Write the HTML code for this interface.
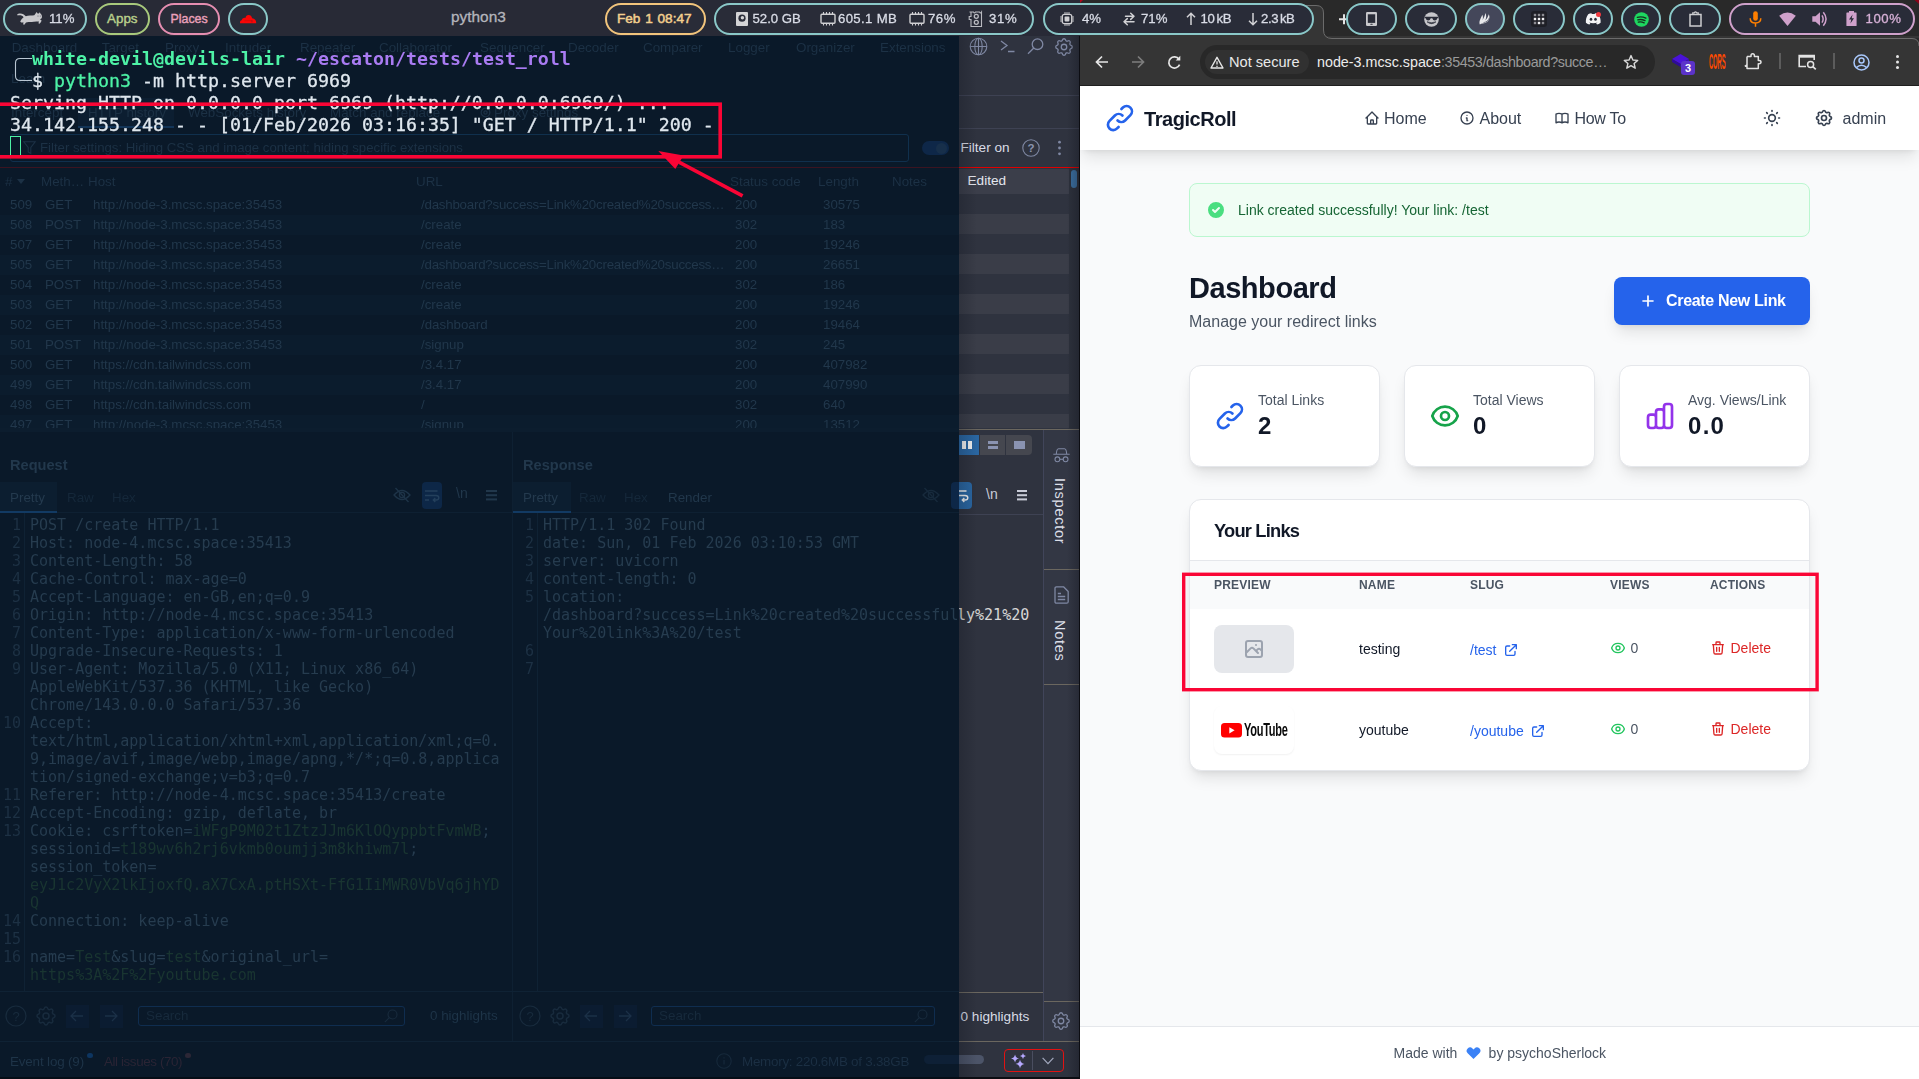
<!DOCTYPE html>
<html lang="en">
<head>
<meta charset="utf-8">
<title>TragicRoll - Dashboard</title>
<style>
*{box-sizing:border-box;margin:0;padding:0}
html,body{width:1919px;height:1079px;overflow:hidden;background:#0a1929}
body{position:relative;font-family:"Liberation Sans",sans-serif;-webkit-font-smoothing:antialiased}
.abs{position:absolute}
svg{display:block;overflow:visible}
/* ---------- top bar ---------- */
#topbar{position:absolute;left:0;top:0;width:1919px;height:36px;background:#282a36;z-index:50}
#topbar .chromebg{position:absolute;left:1080px;top:0;width:839px;height:36px;background:#292929}
.pill{position:absolute;top:3px;height:32px;border:2px solid #8ac8c8;border-radius:16px;background:#292c38}
.pt{position:absolute;top:1px;height:36px;line-height:36px;font-size:13.2px;color:#d9dce6;white-space:nowrap;-webkit-text-stroke:.3px #d9dce6}
/* ---------- terminal ---------- */
#term{position:absolute;left:0;top:36px;width:959px;height:1043px;background:#0a1929;overflow:hidden;will-change:transform}
.tl{position:absolute;left:10px;height:22px;line-height:22px;font-family:"DejaVu Sans Mono","Liberation Mono",monospace;font-size:18.27px;color:#dfe7ee;white-space:pre;-webkit-text-stroke:.3px #dfe7ee}
.g{color:#4df2a6;-webkit-text-stroke-color:#4df2a6}.p{color:#a97bf2}.b{font-weight:bold;-webkit-text-stroke-width:0}
/* faint burp beneath terminal */
.f{position:absolute;white-space:nowrap;font-size:13px;color:#1d3246;line-height:16px}
.fm{position:absolute;white-space:pre;font-family:"DejaVu Sans Mono","Liberation Mono",monospace;font-size:15px;line-height:18px;color:#1b2e40}
/* ---------- burp strip ---------- */
#burp{position:absolute;left:959px;top:36px;width:121px;height:1043px;background:#2f333f;overflow:hidden}
/* ---------- chrome ---------- */
#chrome{position:absolute;left:1080px;top:36px;width:839px;height:1043px;background:#f9fafb;overflow:hidden}
#toolbar{position:absolute;left:0;top:0;width:839px;height:50px;background:#353535;border-bottom:1px solid #1f1f1f}
#page{position:absolute;left:0;top:50px;width:839px;height:993px;background:#f9fafb;overflow:hidden;color:#111827;will-change:transform}
#burp .bt{position:absolute;white-space:nowrap;font-size:13.6px;color:#d9dce6;line-height:18px}
#burp .ln{position:absolute;height:1px;background:#6b675f}
#burp .st{position:absolute;left:0;width:110px;height:20px;background:#3a3d48}

#page .t{position:absolute;white-space:nowrap}
.card{position:absolute;background:#fff;border:1px solid #e5e7eb;border-radius:12px;box-shadow:0 10px 15px -3px rgba(0,0,0,.1),0 4px 6px -4px rgba(0,0,0,.1)}
.nav{font-size:16px;color:#374151;line-height:20px}
.th{font-size:12px;font-weight:bold;color:#4b5563;letter-spacing:.2px;line-height:16px}
.td{font-size:14px;line-height:20px}
</style>
</head>
<body>

<!-- ================= TERMINAL (over Burp) ================= -->
<div id="term">
<!--TERM-FAINT-->
<div class="f" style="left:11.7px;top:3.5px;color:#1c3145;font-size:13.4px">Dashboard</div>
<div class="f" style="left:101.7px;top:3.5px;color:#1c3145;font-size:13.4px">Target</div>
<div class="f" style="left:165px;top:3.5px;color:#1c3145;font-size:13.4px">Proxy</div>
<div class="f" style="left:225px;top:3.5px;color:#1c3145;font-size:13.4px">Intruder</div>
<div class="f" style="left:300px;top:3.5px;color:#1c3145;font-size:13.4px">Repeater</div>
<div class="f" style="left:379px;top:3.5px;color:#1c3145;font-size:13.4px">Collaborator</div>
<div class="f" style="left:480px;top:3.5px;color:#1c3145;font-size:13.4px">Sequencer</div>
<div class="f" style="left:568px;top:3.5px;color:#1c3145;font-size:13.4px">Decoder</div>
<div class="f" style="left:643px;top:3.5px;color:#1c3145;font-size:13.4px">Comparer</div>
<div class="f" style="left:728px;top:3.5px;color:#1c3145;font-size:13.4px">Logger</div>
<div class="f" style="left:796px;top:3.5px;color:#1c3145;font-size:13.4px">Organizer</div>
<div class="f" style="left:880px;top:3.5px;color:#1c3145;font-size:13.4px">Extensions</div>
<div class="f" style="left:11px;top:35px;color:#1c3145;font-size:13.4px">Learn</div>
<div class="abs" style="left:78px;top:62px;width:96px;height:29px;background:#0c1e31"></div><div class="abs" style="left:78px;top:90px;width:96px;height:2px;background:#123457"></div>
<div class="f" style="left:11px;top:68.5px;color:#1c3145;font-size:13.4px">Intercept</div>
<div class="f" style="left:88px;top:68.5px;color:#1c3145;font-size:13.4px">HTTP history</div>
<div class="f" style="left:188px;top:68.5px;color:#1c3145;font-size:13.4px">WebSockets history</div>
<div class="f" style="left:330px;top:68.5px;color:#1c3145;font-size:13.4px">Match and replace</div>
<div class="f" style="left:494px;top:68.5px;color:#1c3145;font-size:13.4px">Proxy settings</div>
<svg class="abs" style="left:479px;top:70px" width="13" height="13" viewBox="0 0 24 24" fill="none" stroke="#1c3145" stroke-width="2.400"><circle cx="12" cy="12" r="8"/><circle cx="12" cy="12" r="3"/></svg>
<div class="abs" style="left:10px;top:98px;width:899px;height:28px;border:1px solid #10304d;border-radius:3px"></div>
<svg class="abs" style="left:23px;top:105px" width="13" height="14" viewBox="0 0 13 14"><path d="M.8 .8H12.200L7.800 6.500V12.500L5.200 11V6.500Z" fill="none" stroke="#1c3145" stroke-width="1.100"/></svg>
<div class="f" style="left:40px;top:104.3px;color:#1c3145;font-size:13.2px">Filter settings: Hiding CSS and image content; hiding specific extensions</div>
<div class="abs" style="left:922px;top:105px;width:27px;height:14px;border-radius:7px;background:#0e2748"></div><div class="abs" style="left:936px;top:106.500px;width:11px;height:11px;border-radius:50%;background:#172f4a"></div>
<div class="abs" style="left:0;top:131px;width:959px;height:1px;background:#3b1421"></div>
<div class="f" style="left:5px;top:137.7px;color:#1c3145;font-size:13.4px">#</div>
<div class="f" style="left:41px;top:137.7px;color:#1c3145;font-size:13.4px">Meth…</div>
<div class="f" style="left:88px;top:137.7px;color:#1c3145;font-size:13.4px">Host</div>
<div class="f" style="left:416px;top:137.7px;color:#1c3145;font-size:13.4px">URL</div>
<div class="f" style="left:730px;top:137.7px;color:#1c3145;font-size:13.4px">Status code</div>
<div class="f" style="left:818px;top:137.7px;color:#1c3145;font-size:13.4px">Length</div>
<div class="f" style="left:892px;top:137.7px;color:#1c3145;font-size:13.4px">Notes</div>
<svg class="abs" style="left:17px;top:143px" width="8" height="5" viewBox="0 0 8 5"><path d="M0 0H8L4 5Z" fill="#1c3145"/></svg>
<div class="abs" style="left:0;top:159px;width:959px;height:233px;overflow:hidden"><div class="f" style="left:10px;top:2px;color:#21374b;font-size:13.3px">509</div><div class="f" style="left:45px;top:2px;color:#21374b;font-size:13.3px">GET</div><div class="f" style="left:93px;top:2px;color:#21374b;font-size:13.3px">http://node-3.mcsc.space:35453</div><div class="f" style="left:421px;top:2px;color:#21374b;font-size:13.3px"><span style="letter-spacing:-.22px">/dashboard?success=Link%20created%20success…</span></div><div class="f" style="left:735px;top:2px;color:#21374b;font-size:13.3px">200</div><div class="f" style="left:823px;top:2px;color:#21374b;font-size:13.3px">30575</div><div class="abs" style="left:0;top:20px;width:959px;height:20px;background:#0b1c2d"></div><div class="f" style="left:10px;top:22px;color:#21374b;font-size:13.3px">508</div><div class="f" style="left:45px;top:22px;color:#21374b;font-size:13.3px">POST</div><div class="f" style="left:93px;top:22px;color:#21374b;font-size:13.3px">http://node-3.mcsc.space:35453</div><div class="f" style="left:421px;top:22px;color:#21374b;font-size:13.3px">/create</div><div class="f" style="left:735px;top:22px;color:#21374b;font-size:13.3px">302</div><div class="f" style="left:823px;top:22px;color:#21374b;font-size:13.3px">183</div><div class="f" style="left:10px;top:42px;color:#21374b;font-size:13.3px">507</div><div class="f" style="left:45px;top:42px;color:#21374b;font-size:13.3px">GET</div><div class="f" style="left:93px;top:42px;color:#21374b;font-size:13.3px">http://node-3.mcsc.space:35453</div><div class="f" style="left:421px;top:42px;color:#21374b;font-size:13.3px">/create</div><div class="f" style="left:735px;top:42px;color:#21374b;font-size:13.3px">200</div><div class="f" style="left:823px;top:42px;color:#21374b;font-size:13.3px">19246</div><div class="abs" style="left:0;top:60px;width:959px;height:20px;background:#0b1c2d"></div><div class="f" style="left:10px;top:62px;color:#21374b;font-size:13.3px">505</div><div class="f" style="left:45px;top:62px;color:#21374b;font-size:13.3px">GET</div><div class="f" style="left:93px;top:62px;color:#21374b;font-size:13.3px">http://node-3.mcsc.space:35453</div><div class="f" style="left:421px;top:62px;color:#21374b;font-size:13.3px"><span style="letter-spacing:-.22px">/dashboard?success=Link%20created%20success…</span></div><div class="f" style="left:735px;top:62px;color:#21374b;font-size:13.3px">200</div><div class="f" style="left:823px;top:62px;color:#21374b;font-size:13.3px">26651</div><div class="f" style="left:10px;top:82px;color:#21374b;font-size:13.3px">504</div><div class="f" style="left:45px;top:82px;color:#21374b;font-size:13.3px">POST</div><div class="f" style="left:93px;top:82px;color:#21374b;font-size:13.3px">http://node-3.mcsc.space:35453</div><div class="f" style="left:421px;top:82px;color:#21374b;font-size:13.3px">/create</div><div class="f" style="left:735px;top:82px;color:#21374b;font-size:13.3px">302</div><div class="f" style="left:823px;top:82px;color:#21374b;font-size:13.3px">186</div><div class="abs" style="left:0;top:100px;width:959px;height:20px;background:#0b1c2d"></div><div class="f" style="left:10px;top:102px;color:#21374b;font-size:13.3px">503</div><div class="f" style="left:45px;top:102px;color:#21374b;font-size:13.3px">GET</div><div class="f" style="left:93px;top:102px;color:#21374b;font-size:13.3px">http://node-3.mcsc.space:35453</div><div class="f" style="left:421px;top:102px;color:#21374b;font-size:13.3px">/create</div><div class="f" style="left:735px;top:102px;color:#21374b;font-size:13.3px">200</div><div class="f" style="left:823px;top:102px;color:#21374b;font-size:13.3px">19246</div><div class="f" style="left:10px;top:122px;color:#21374b;font-size:13.3px">502</div><div class="f" style="left:45px;top:122px;color:#21374b;font-size:13.3px">GET</div><div class="f" style="left:93px;top:122px;color:#21374b;font-size:13.3px">http://node-3.mcsc.space:35453</div><div class="f" style="left:421px;top:122px;color:#21374b;font-size:13.3px">/dashboard</div><div class="f" style="left:735px;top:122px;color:#21374b;font-size:13.3px">200</div><div class="f" style="left:823px;top:122px;color:#21374b;font-size:13.3px">19464</div><div class="abs" style="left:0;top:140px;width:959px;height:20px;background:#0b1c2d"></div><div class="f" style="left:10px;top:142px;color:#21374b;font-size:13.3px">501</div><div class="f" style="left:45px;top:142px;color:#21374b;font-size:13.3px">POST</div><div class="f" style="left:93px;top:142px;color:#21374b;font-size:13.3px">http://node-3.mcsc.space:35453</div><div class="f" style="left:421px;top:142px;color:#21374b;font-size:13.3px">/signup</div><div class="f" style="left:735px;top:142px;color:#21374b;font-size:13.3px">302</div><div class="f" style="left:823px;top:142px;color:#21374b;font-size:13.3px">245</div><div class="f" style="left:10px;top:162px;color:#21374b;font-size:13.3px">500</div><div class="f" style="left:45px;top:162px;color:#21374b;font-size:13.3px">GET</div><div class="f" style="left:93px;top:162px;color:#21374b;font-size:13.3px">https://cdn.tailwindcss.com</div><div class="f" style="left:421px;top:162px;color:#21374b;font-size:13.3px">/3.4.17</div><div class="f" style="left:735px;top:162px;color:#21374b;font-size:13.3px">200</div><div class="f" style="left:823px;top:162px;color:#21374b;font-size:13.3px">407982</div><div class="abs" style="left:0;top:180px;width:959px;height:20px;background:#0b1c2d"></div><div class="f" style="left:10px;top:182px;color:#21374b;font-size:13.3px">499</div><div class="f" style="left:45px;top:182px;color:#21374b;font-size:13.3px">GET</div><div class="f" style="left:93px;top:182px;color:#21374b;font-size:13.3px">https://cdn.tailwindcss.com</div><div class="f" style="left:421px;top:182px;color:#21374b;font-size:13.3px">/3.4.17</div><div class="f" style="left:735px;top:182px;color:#21374b;font-size:13.3px">200</div><div class="f" style="left:823px;top:182px;color:#21374b;font-size:13.3px">407990</div><div class="f" style="left:10px;top:202px;color:#21374b;font-size:13.3px">498</div><div class="f" style="left:45px;top:202px;color:#21374b;font-size:13.3px">GET</div><div class="f" style="left:93px;top:202px;color:#21374b;font-size:13.3px">https://cdn.tailwindcss.com</div><div class="f" style="left:421px;top:202px;color:#21374b;font-size:13.3px">/</div><div class="f" style="left:735px;top:202px;color:#21374b;font-size:13.3px">302</div><div class="f" style="left:823px;top:202px;color:#21374b;font-size:13.3px">640</div><div class="abs" style="left:0;top:220px;width:959px;height:20px;background:#0b1c2d"></div><div class="f" style="left:10px;top:222px;color:#21374b;font-size:13.3px">497</div><div class="f" style="left:45px;top:222px;color:#21374b;font-size:13.3px">GET</div><div class="f" style="left:93px;top:222px;color:#21374b;font-size:13.3px">http://node-3.mcsc.space:35453</div><div class="f" style="left:421px;top:222px;color:#21374b;font-size:13.3px">/signup</div><div class="f" style="left:735px;top:222px;color:#21374b;font-size:13.3px">200</div><div class="f" style="left:823px;top:222px;color:#21374b;font-size:13.3px">13512</div></div>
<div class="abs" style="left:0;top:392px;width:959px;height:4px;background:#0c1d2e"></div>
<div class="f" style="left:10px;top:421px;color:#22384c;font-size:14.600px;font-weight:bold">Request</div>
<div class="f" style="left:523px;top:421px;color:#22384c;font-size:14.600px;font-weight:bold">Response</div>
<div class="abs" style="left:0;top:446px;width:57px;height:30px;background:#0c1e30"></div><div class="abs" style="left:0;top:474.500px;width:57px;height:2px;background:#123a63"></div>
<div class="abs" style="left:513px;top:446px;width:58px;height:30px;background:#0c1e30"></div><div class="abs" style="left:513px;top:474.500px;width:58px;height:2px;background:#123a63"></div>
<div class="abs" style="left:57px;top:476px;width:455px;height:1px;background:#0e2032"></div><div class="abs" style="left:571px;top:476px;width:388px;height:1px;background:#0e2032"></div>
<div class="f" style="left:10px;top:454px;color:#243a4e;font-size:13.4px">Pretty</div>
<div class="f" style="left:67px;top:454px;color:#15283a;font-size:13.4px">Raw</div>
<div class="f" style="left:112px;top:454px;color:#15283a;font-size:13.4px">Hex</div>
<div class="f" style="left:523px;top:454px;color:#243a4e;font-size:13.4px">Pretty</div>
<div class="f" style="left:579px;top:454px;color:#15283a;font-size:13.4px">Raw</div>
<div class="f" style="left:624px;top:454px;color:#15283a;font-size:13.4px">Hex</div>
<div class="f" style="left:668px;top:454px;color:#21374b;font-size:13.4px">Render</div>
<div class="abs" style="left:422px;top:446px;width:20px;height:27px;border-radius:4px;background:#0d2747"></div>
<svg class="abs" style="left:393px;top:451px" width="18" height="16" viewBox="0 0 18 16" fill="none" stroke="#1e3448" stroke-width="1.300"><path d="M1 8Q9 -1 17 8 9 17 1 8Z"/><circle cx="9" cy="8" r="2.600"/><path d="M2.500 1L15.500 15"/></svg>
<svg class="abs" style="left:424px;top:453px" width="16" height="13" viewBox="0 0 16 13" fill="none" stroke="#24405c" stroke-width="1.400"><path d="M1 2H13.500M1 6.500H12Q14.800 6.500 14.800 8.700 14.800 11 12 11H9.500M11.300 9L9.300 11 11.300 13M1 11H5"/></svg>
<div class="f" style="left:456px;top:449px;color:#21374b;font-size:14px">\n</div>
<div class="abs" style="left:486px;top:454px;width:11px;height:1.600px;background:#21374b;box-shadow:0 4.200px 0 #21374b,0 8.400px 0 #21374b"></div>
<svg class="abs" style="left:922px;top:451px" width="18" height="16" viewBox="0 0 18 16" fill="none" stroke="#172a3c" stroke-width="1.300"><path d="M1 8Q9 -1 17 8 9 17 1 8Z"/><circle cx="9" cy="8" r="2.600"/><path d="M2.500 1L15.500 15"/></svg>
<div class="abs" style="left:951px;top:446px;width:8px;height:27px;border-radius:4px 0 0 4px;background:#0d2747"></div>
<div class="abs" style="left:512px;top:396px;width:1px;height:610px;background:#0e2032"></div>
<div class="abs" style="left:24px;top:477px;width:1px;height:478px;background:#0f2234"></div><div class="abs" style="left:537px;top:477px;width:1px;height:478px;background:#0f2234"></div>
<div class="abs" style="left:0;top:955px;width:959px;height:1px;background:#0f2234"></div><div class="abs" style="left:0;top:1004.500px;width:959px;height:1px;background:#0f2234"></div>
<div class="fm" style="left:0;top:480px;width:21px;text-align:right;color:#1d3144">1</div>
<div class="fm" style="left:30px;top:480px;color:#263c4f">POST /create HTTP/1.1</div>
<div class="fm" style="left:0;top:498px;width:21px;text-align:right;color:#1d3144">2</div>
<div class="fm" style="left:30px;top:498px;color:#263c4f">Host: node-4.mcsc.space:35413</div>
<div class="fm" style="left:0;top:516px;width:21px;text-align:right;color:#1d3144">3</div>
<div class="fm" style="left:30px;top:516px;color:#263c4f">Content-Length: 58</div>
<div class="fm" style="left:0;top:534px;width:21px;text-align:right;color:#1d3144">4</div>
<div class="fm" style="left:30px;top:534px;color:#263c4f">Cache-Control: max-age=0</div>
<div class="fm" style="left:0;top:552px;width:21px;text-align:right;color:#1d3144">5</div>
<div class="fm" style="left:30px;top:552px;color:#263c4f">Accept-Language: en-GB,en;q=0.9</div>
<div class="fm" style="left:0;top:570px;width:21px;text-align:right;color:#1d3144">6</div>
<div class="fm" style="left:30px;top:570px;color:#263c4f">Origin: http://node-4.mcsc.space:35413</div>
<div class="fm" style="left:0;top:588px;width:21px;text-align:right;color:#1d3144">7</div>
<div class="fm" style="left:30px;top:588px;color:#263c4f">Content-Type: application/x-www-form-urlencoded</div>
<div class="fm" style="left:0;top:606px;width:21px;text-align:right;color:#1d3144">8</div>
<div class="fm" style="left:30px;top:606px;color:#263c4f">Upgrade-Insecure-Requests: 1</div>
<div class="fm" style="left:0;top:624px;width:21px;text-align:right;color:#1d3144">9</div>
<div class="fm" style="left:30px;top:624px;color:#263c4f">User-Agent: Mozilla/5.0 (X11; Linux x86_64)</div>
<div class="fm" style="left:30px;top:642px;color:#263c4f">AppleWebKit/537.36 (KHTML, like Gecko)</div>
<div class="fm" style="left:30px;top:660px;color:#263c4f">Chrome/143.0.0.0 Safari/537.36</div>
<div class="fm" style="left:0;top:678px;width:21px;text-align:right;color:#1d3144">10</div>
<div class="fm" style="left:30px;top:678px;color:#263c4f">Accept:</div>
<div class="fm" style="left:30px;top:696px;color:#263c4f">text/html,application/xhtml+xml,application/xml;q=0.</div>
<div class="fm" style="left:30px;top:714px;color:#263c4f">9,image/avif,image/webp,image/apng,*/*;q=0.8,applica</div>
<div class="fm" style="left:30px;top:732px;color:#263c4f">tion/signed-exchange;v=b3;q=0.7</div>
<div class="fm" style="left:0;top:750px;width:21px;text-align:right;color:#1d3144">11</div>
<div class="fm" style="left:30px;top:750px;color:#263c4f">Referer: http://node-4.mcsc.space:35413/create</div>
<div class="fm" style="left:0;top:768px;width:21px;text-align:right;color:#1d3144">12</div>
<div class="fm" style="left:30px;top:768px;color:#263c4f">Accept-Encoding: gzip, deflate, br</div>
<div class="fm" style="left:0;top:786px;width:21px;text-align:right;color:#1d3144">13</div>
<div class="fm" style="left:30px;top:786px;color:#263c4f">Cookie: csrftoken=<span style="color:#193531">iWFgP9M02t1ZtzJJm6KlOQyppbtFvmWB</span>;</div>
<div class="fm" style="left:30px;top:804px;color:#263c4f">sessionid=<span style="color:#193531">t189wv6h2rj6vkmb0oumjj3m8khiwm7l</span>;</div>
<div class="fm" style="left:30px;top:822px;color:#263c4f">session_token=</div>
<div class="fm" style="left:30px;top:840px;color:#263c4f"><span style="color:#193531">eyJ1c2VyX2lkIjoxfQ.aX7CxA.ptHSXt-FfG1IiMWR0VbVq6jhYD</span></div>
<div class="fm" style="left:30px;top:858px;color:#263c4f"><span style="color:#193531">Q</span></div>
<div class="fm" style="left:0;top:876px;width:21px;text-align:right;color:#1d3144">14</div>
<div class="fm" style="left:30px;top:876px;color:#263c4f">Connection: keep-alive</div>
<div class="fm" style="left:0;top:894px;width:21px;text-align:right;color:#1d3144">15</div>
<div class="fm" style="left:0;top:912px;width:21px;text-align:right;color:#1d3144">16</div>
<div class="fm" style="left:30px;top:912px;color:#263c4f">name=<span style="color:#193531">Test</span>&amp;slug=<span style="color:#193531">test</span>&amp;original_url=</div>
<div class="fm" style="left:30px;top:930px;color:#263c4f"><span style="color:#193531">https%3A%2F%2Fyoutube.com</span></div>
<div class="fm" style="left:513px;top:480px;width:21px;text-align:right;color:#1d3144">1</div>
<div class="fm" style="left:543px;top:480px;color:#263c4f">HTTP/1.1 302 Found</div>
<div class="fm" style="left:513px;top:498px;width:21px;text-align:right;color:#1d3144">2</div>
<div class="fm" style="left:543px;top:498px;color:#263c4f">date: Sun, 01 Feb 2026 03:10:53 GMT</div>
<div class="fm" style="left:513px;top:516px;width:21px;text-align:right;color:#1d3144">3</div>
<div class="fm" style="left:543px;top:516px;color:#263c4f">server: uvicorn</div>
<div class="fm" style="left:513px;top:534px;width:21px;text-align:right;color:#1d3144">4</div>
<div class="fm" style="left:543px;top:534px;color:#263c4f">content-length: 0</div>
<div class="fm" style="left:513px;top:552px;width:21px;text-align:right;color:#1d3144">5</div>
<div class="fm" style="left:543px;top:552px;color:#263c4f">location:</div>
<div class="fm" style="left:543px;top:570px;color:#263c4f">/dashboard?success=Link%20created%20successful</div>
<div class="fm" style="left:543px;top:588px;color:#263c4f">Your%20link%3A%20/test</div>
<div class="fm" style="left:513px;top:606px;width:21px;text-align:right;color:#1d3144">6</div>
<div class="fm" style="left:513px;top:624px;width:21px;text-align:right;color:#1d3144">7</div>
<svg class="abs" style="left:5px;top:969px" width="22" height="22" viewBox="0 0 22 22"><circle cx="11" cy="11" r="10" fill="none" stroke="#182b3d" stroke-width="1.200"/><text x="11" y="15.500" text-anchor="middle" font-family="Liberation Sans, sans-serif" font-size="13" fill="#182b3d">?</text></svg><svg class="abs" style="left:34px;top:968px" width="24" height="24" viewBox="0 0 24 24" fill="none" stroke="#182b3d" stroke-width="1.500"><path d="M10.325 4.317c.426-1.756 2.924-1.756 3.350 0a1.724 1.724 0 002.573 1.066c1.543-.940 3.310.826 2.370 2.370a1.724 1.724 0 001.065 2.572c1.756.426 1.756 2.924 0 3.350a1.724 1.724 0 00-1.066 2.573c.940 1.543-.826 3.310-2.370 2.370a1.724 1.724 0 00-2.572 1.065c-.426 1.756-2.924 1.756-3.350 0a1.724 1.724 0 00-2.573-1.066c-1.543.940-3.310-.826-2.370-2.370a1.724 1.724 0 00-1.065-2.572c-1.756-.426-1.756-2.924 0-3.350a1.724 1.724 0 001.066-2.573c-.940-1.543.826-3.310 2.370-2.370.996.608 2.296.070 2.572-1.065z"/><circle cx="12" cy="12" r="3"/></svg><div class="abs" style="left:66px;top:969px;width:23px;height:23px;background:#0b1c31"></div><svg class="abs" style="left:66px;top:969px" width="22" height="22" viewBox="0 0 22 22"><path d="M17 11H5M10 6L5 11 10 16" fill="none" stroke="#1b3047" stroke-width="1.300"/></svg><div class="abs" style="left:100px;top:969px;width:23px;height:23px;background:#0b1c31"></div><svg class="abs" style="left:100px;top:969px" width="22" height="22" viewBox="0 0 22 22"><path d="M5 11H17M12 6L17 11 12 16" fill="none" stroke="#1b3047" stroke-width="1.300"/></svg><div class="abs" style="left:138px;top:970px;width:267px;height:20px;border:1px solid #0f2d4f;border-radius:3px"></div><div class="f" style="left:146px;top:972px;color:#172a3c;font-size:13.4px">Search</div><svg class="abs" style="left:384px;top:973px" width="14" height="14" viewBox="0 0 14 14" fill="none" stroke="#182b3d" stroke-width="1.100"><circle cx="8.500" cy="5.500" r="4.500"/><path d="M5.300 8.700L.8 13.200"/></svg>
<svg class="abs" style="left:519px;top:969px" width="22" height="22" viewBox="0 0 22 22"><circle cx="11" cy="11" r="10" fill="none" stroke="#182b3d" stroke-width="1.200"/><text x="11" y="15.500" text-anchor="middle" font-family="Liberation Sans, sans-serif" font-size="13" fill="#182b3d">?</text></svg><svg class="abs" style="left:548px;top:968px" width="24" height="24" viewBox="0 0 24 24" fill="none" stroke="#182b3d" stroke-width="1.500"><path d="M10.325 4.317c.426-1.756 2.924-1.756 3.350 0a1.724 1.724 0 002.573 1.066c1.543-.940 3.310.826 2.370 2.370a1.724 1.724 0 001.065 2.572c1.756.426 1.756 2.924 0 3.350a1.724 1.724 0 00-1.066 2.573c.940 1.543-.826 3.310-2.370 2.370a1.724 1.724 0 00-2.572 1.065c-.426 1.756-2.924 1.756-3.350 0a1.724 1.724 0 00-2.573-1.066c-1.543.940-3.310-.826-2.370-2.370a1.724 1.724 0 00-1.065-2.572c-1.756-.426-1.756-2.924 0-3.350a1.724 1.724 0 001.066-2.573c-.940-1.543.826-3.310 2.370-2.370.996.608 2.296.070 2.572-1.065z"/><circle cx="12" cy="12" r="3"/></svg><div class="abs" style="left:580px;top:969px;width:23px;height:23px;background:#0b1c31"></div><svg class="abs" style="left:580px;top:969px" width="22" height="22" viewBox="0 0 22 22"><path d="M17 11H5M10 6L5 11 10 16" fill="none" stroke="#1b3047" stroke-width="1.300"/></svg><div class="abs" style="left:614px;top:969px;width:23px;height:23px;background:#0b1c31"></div><svg class="abs" style="left:614px;top:969px" width="22" height="22" viewBox="0 0 22 22"><path d="M5 11H17M12 6L17 11 12 16" fill="none" stroke="#1b3047" stroke-width="1.300"/></svg><div class="abs" style="left:651px;top:970px;width:284px;height:20px;border:1px solid #0f2d4f;border-radius:3px"></div><div class="f" style="left:659px;top:972px;color:#172a3c;font-size:13.4px">Search</div><svg class="abs" style="left:914px;top:973px" width="14" height="14" viewBox="0 0 14 14" fill="none" stroke="#182b3d" stroke-width="1.100"><circle cx="8.500" cy="5.500" r="4.500"/><path d="M5.300 8.700L.8 13.200"/></svg>
<div class="f" style="left:430px;top:972px;color:#1e3448;font-size:13.400px">0 highlights</div>
<div class="f" style="left:10px;top:1017.500px;color:#1e3448;font-size:13.400px;letter-spacing:-.15px">Event log (9)</div><div class="abs" style="left:87px;top:1016.500px;width:5.500px;height:5.500px;border-radius:50%;background:#0d3560"></div>
<div class="f" style="left:104px;top:1017.500px;color:#2a2434;font-size:13.400px;letter-spacing:-.4px">All issues (70)</div><div class="abs" style="left:185px;top:1016.500px;width:5.500px;height:5.500px;border-radius:50%;background:#2c2736"></div>
<svg class="abs" style="left:716px;top:1017px" width="16" height="16" viewBox="0 0 16 16"><circle cx="8" cy="8" r="7.200" fill="none" stroke="#16293b" stroke-width="1.100"/><path d="M8 7V11.500M8 4.300V5.500" stroke="#16293b" stroke-width="1.200"/></svg>
<div class="f" style="left:742px;top:1017.500px;color:#1b2f43;font-size:13.400px;letter-spacing:-.25px">Memory: 220.6MB of 3.38GB</div>
<div class="abs" style="left:924px;top:1019px;width:40px;height:9px;border-radius:4.500px;background:#0e2036"></div>
<div class="abs" style="left:0;top:1041px;width:959px;height:2px;background:#050d16"></div>
<!--/TERM-FAINT-->
<!--TERM-TEXT-->
<svg class="abs" style="left:0;top:0" width="60" height="60"><path d="M32 22.5H20Q15.5 22.5 15.5 27V40Q15.5 44.5 20 44.5H32" fill="none" stroke="#b9c6d2" stroke-width="1.1"/></svg>
<div class="tl" style="top:12px">  <span class="g b">white-devil@devils-lair</span> <span class="p b">~/escaton/tests/test_roll</span></div>
<div class="tl" style="top:34px">  $ <span class="g">python3</span> -m http.server 6969</div>
<div class="tl" style="top:56px">Serving HTTP on 0.0.0.0 port 6969 (http://0.0.0.0:6969/) ...</div>
<div class="tl" style="top:78px">34.142.155.248 - - [01/Feb/2026 03:16:35] "GET / HTTP/1.1" 200 -</div>
<div class="abs" style="left:10px;top:100px;width:11px;height:20px;border:1px solid #4df2a6"></div>
<!--/TERM-TEXT-->
</div>

<!-- ================= BURP STRIP ================= -->
<div id="burp">
<!--BURP-->
<!-- coords relative to (959,36) -->
<!-- top icons -->
<svg class="abs" style="left:10px;top:1px" width="19" height="19" viewBox="0 0 19 19" fill="none" stroke="#7f88a3" stroke-width="1.100"><circle cx="9.500" cy="9.500" r="8.300"/><ellipse cx="9.500" cy="9.500" rx="3.700" ry="8.300"/><path d="M1.200 9.500H17.800M9.500 1.200V17.800"/></svg>
<svg class="abs" style="left:41px;top:4px" width="15" height="13" viewBox="0 0 15 13" fill="none" stroke="#7f88a3" stroke-width="1.300"><path d="M1 1L7 5.500 1 10M8 11.500H14.500"/></svg>
<svg class="abs" style="left:68px;top:2px" width="17" height="17" viewBox="0 0 17 17" fill="none" stroke="#7f88a3" stroke-width="1.300"><circle cx="10.500" cy="6.200" r="5.300"/><path d="M6.800 10L1 15.800"/></svg>
<svg class="abs" style="left:94px;top:-.5px" width="22" height="22" viewBox="0 0 24 24" fill="none" stroke="#7f88a3" stroke-width="1.400" stroke-linecap="round" stroke-linejoin="round"><path d="M10.325 4.317c.426-1.756 2.924-1.756 3.350 0a1.724 1.724 0 002.573 1.066c1.543-.940 3.310.826 2.370 2.370a1.724 1.724 0 001.065 2.572c1.756.426 1.756 2.924 0 3.350a1.724 1.724 0 00-1.066 2.573c.940 1.543-.826 3.310-2.370 2.370a1.724 1.724 0 00-2.572 1.065c-.426 1.756-2.924 1.756-3.350 0a1.724 1.724 0 00-2.573-1.066c-1.543.940-3.310-.826-2.370-2.370a1.724 1.724 0 00-1.065-2.572c-1.756-.426-1.756-2.924 0-3.350a1.724 1.724 0 001.066-2.573c-.940-1.543.826-3.310 2.370-2.370.996.608 2.296.070 2.572-1.065z"/><circle cx="12" cy="12" r="3"/></svg>
<div class="abs" style="left:0;top:59px;width:120px;height:1px;background:#3e4253"></div>
<div class="abs" style="left:0;top:92px;width:120px;height:1px;background:#3e4253"></div>
<!-- filter row -->
<div class="bt" style="left:1.500px;top:103px">Filter on</div>
<svg class="abs" style="left:62.500px;top:103px" width="18" height="18" viewBox="0 0 18 18"><circle cx="9" cy="9" r="8.200" fill="none" stroke="#7f88a3" stroke-width="1.100"/><text x="9" y="13.200" text-anchor="middle" font-family="Liberation Sans, sans-serif" font-size="11.500" font-weight="bold" fill="#8a93ad">?</text></svg>
<svg class="abs" style="left:98px;top:104px" width="5" height="16" viewBox="0 0 5 16" fill="#7f88a3"><circle cx="2.500" cy="2.200" r="1.400"/><circle cx="2.500" cy="8" r="1.400"/><circle cx="2.500" cy="13.800" r="1.400"/></svg>
<div class="abs" style="left:0;top:131px;width:120px;height:1px;background:#e10000"></div>
<!-- table header + stripes -->
<div class="abs" style="left:110px;top:132px;width:10px;height:262px;background:#2d313c"></div>
<div class="abs" style="left:0;top:133px;width:110px;height:25px;background:#3b3e4a"></div>
<div class="bt" style="left:8.500px;top:136px;color:#e4e6ee">Edited</div>
<div class="abs" style="left:112px;top:134px;width:6px;height:18px;border-radius:3px;background:#3b6e9f"></div>
<div class="st" style="top:178px"></div><div class="st" style="top:218px"></div><div class="st" style="top:258px"></div><div class="st" style="top:298px"></div><div class="st" style="top:338px"></div><div class="st" style="top:378px;height:14px"></div>
<div class="ln" style="left:0;top:393px;width:120px"></div>
<!-- inspector column -->
<div class="abs" style="left:84px;top:394px;width:36px;height:612px;background:#333744;border-left:1px solid #41455a"></div>
<!-- layout buttons -->
<div class="abs" style="left:-6px;top:399px;width:26px;height:20px;background:#2a66a1;border-radius:4px 0 0 4px"></div>
<div class="abs" style="left:2.800px;top:404.600px;width:4px;height:8.400px;background:#f1f1f1"></div><div class="abs" style="left:9.200px;top:404.600px;width:4px;height:8.400px;background:#f1f1f1"></div>
<div class="abs" style="left:21px;top:399px;width:25px;height:20px;background:#45474f"></div>
<div class="abs" style="left:28.500px;top:404.600px;width:10.500px;height:3px;background:#8a93b1"></div><div class="abs" style="left:28.500px;top:410px;width:10.500px;height:3px;background:#8a93b1"></div>
<div class="abs" style="left:47px;top:399px;width:26px;height:20px;background:#45474f;border-radius:0 4px 4px 0"></div>
<div class="abs" style="left:54.500px;top:404.600px;width:11px;height:8.400px;background:#8a93b1"></div>
<!-- editor toolbar -->
<div class="abs" style="left:-8px;top:446px;width:21px;height:27px;background:#2a66a1;border-radius:4px"></div>
<svg class="abs" style="left:-6px;top:453px" width="16" height="13" viewBox="0 0 16 13" fill="none" stroke="#f1f1f1" stroke-width="1.400"><path d="M1 2H13.500M1 6.500H12Q14.800 6.500 14.800 8.700 14.800 11 12 11H9.500M11.300 9L9.300 11 11.300 13M1 11H5"/></svg>
<div class="bt" style="left:27px;top:449px;font-size:14px;color:#c9ccd8">\n</div>
<div class="abs" style="left:58px;top:454px;width:10px;height:1.600px;background:#c9ccd8;box-shadow:0 4.200px 0 #c9ccd8,0 8.400px 0 #c9ccd8"></div>
<div class="abs" style="left:0;top:478px;width:84px;height:1px;background:#3e4253"></div>
<!-- response text tail -->
<div class="abs" style="left:-2px;top:570px;font-family:'DejaVu Sans Mono','Liberation Mono',monospace;font-size:15px;line-height:18px;color:#d6d6d6;white-space:pre">ly%21%20</div>
<!-- inspector tab -->
<svg class="abs" style="left:94px;top:411.500px" width="17" height="15" viewBox="0 0 17 15" fill="none" stroke="#7f88a3" stroke-width="1.100"><path d="M.3 6.300H16.700M3.300 6.300Q3.600 .8 5.600 .8H11.400Q13.400 .8 13.700 6.300"/><circle cx="4.400" cy="11.300" r="2.400"/><circle cx="12.600" cy="11.300" r="2.400"/><path d="M6.800 11.300H10.200"/></svg>
<div class="bt" style="left:92px;top:442px;width:18px;height:66px;writing-mode:vertical-rl;font-size:14.5px;letter-spacing:.75px;line-height:18px;color:#dcdfe8">Inspector</div>
<div class="ln" style="left:85px;top:533px;width:35px"></div>
<svg class="abs" style="left:95px;top:549.500px" width="15" height="18" viewBox="0 0 15 18" fill="none" stroke="#7f88a3" stroke-width="1.300" stroke-linejoin="round"><path d="M2.500 .8H9.500L14.200 5.500V15.700Q14.200 17.200 12.700 17.200H2.500Q1 17.200 1 15.700V2.300Q1 .8 2.500 .8Z"/><path d="M3.800 7.500H7M3.800 10.500H11.200M3.800 13.500H11.200"/></svg>
<div class="bt" style="left:92px;top:584px;width:18px;height:40px;writing-mode:vertical-rl;font-size:14.5px;letter-spacing:.7px;line-height:18px;color:#dcdfe8">Notes</div>
<div class="ln" style="left:85px;top:648px;width:35px"></div>
<!-- bottom -->
<div class="ln" style="left:0;top:956px;width:84px"></div>
<div class="ln" style="left:85px;top:965px;width:35px"></div>
<div class="bt" style="left:1.500px;top:971.500px">0 highlights</div>
<svg class="abs" style="left:91px;top:974px" width="22" height="22" viewBox="0 0 24 24" fill="none" stroke="#7f88a3" stroke-width="1.400" stroke-linecap="round" stroke-linejoin="round"><path d="M10.325 4.317c.426-1.756 2.924-1.756 3.350 0a1.724 1.724 0 002.573 1.066c1.543-.940 3.310.826 2.370 2.370a1.724 1.724 0 001.065 2.572c1.756.426 1.756 2.924 0 3.350a1.724 1.724 0 00-1.066 2.573c.940 1.543-.826 3.310-2.370 2.370a1.724 1.724 0 00-2.572 1.065c-.426 1.756-2.924 1.756-3.350 0a1.724 1.724 0 00-2.573-1.066c-1.543.940-3.310-.826-2.370-2.370a1.724 1.724 0 00-1.065-2.572c-1.756-.426-1.756-2.924 0-3.350a1.724 1.724 0 001.066-2.573c-.940-1.543.826-3.310 2.370-2.370.996.608 2.296.070 2.572-1.065z"/><circle cx="12" cy="12" r="3"/></svg>
<div class="abs" style="left:0;top:1005px;width:120px;height:38px;background:#2f333f"></div>
<div class="ln" style="left:0;top:1005px;width:120px"></div>
<div class="abs" style="left:-20px;top:1019px;width:44.500px;height:9px;border-radius:4.500px;background:#4c5468"></div>
<div class="abs" style="left:45px;top:1013px;width:60px;height:23px;border:1px solid #e21212;border-radius:4px"></div>
<div class="abs" style="left:73px;top:1015px;width:1px;height:19px;background:#4a4e60"></div>
<svg class="abs" style="left:52px;top:1016.500px" width="16" height="16" viewBox="0 0 16 16" fill="#b5a8ff"><path d="M4 1.500Q4.500 5 8 5.500 4.500 6 4 9.500 3.500 6 0 5.500 3.500 5 4 1.500Z"/><path d="M12 0Q12.300 2.700 15 3 12.300 3.300 12 6 11.700 3.300 9 3 11.700 2.700 12 0Z"/><path d="M9 6.500Q9.600 10.400 13.500 11 9.600 11.600 9 15.500 8.400 11.600 4.500 11 8.400 10.400 9 6.500Z"/></svg>
<svg class="abs" style="left:83px;top:1020.500px" width="12" height="8" viewBox="0 0 12 8"><path d="M.6 .8L6 6.600 11.400 .8" fill="none" stroke="#a2a8bd" stroke-width="1.200"/></svg>
<div class="abs" style="left:0;top:1041px;width:121px;height:2px;background:#0c0d12"></div>
<div class="abs" style="left:120px;top:0;width:1px;height:1043px;background:#0c0d12"></div>

<div class="abs" style="left:0;top:0;width:18px;height:1043px;background:linear-gradient(90deg,rgba(10,14,24,.22),rgba(10,14,24,0))"></div>
<div class="abs" style="left:108px;top:0;width:12px;height:1043px;background:linear-gradient(90deg,rgba(10,12,20,0),rgba(10,12,20,.28))"></div>
<!--/BURP-->
</div>

<!-- ================= CHROME ================= -->
<div id="chrome">
<div id="toolbar">
<!--TOOLBAR-->
<!-- coordinates relative to (1080,36) -->
<svg class="abs" style="left:15px;top:19px" width="14" height="14" viewBox="0 0 14 14"><path d="M13 7H2M7 1.500L1.500 7 7 12.500" fill="none" stroke="#e6e6e6" stroke-width="1.700"/></svg>
<svg class="abs" style="left:51px;top:19px" width="14" height="14" viewBox="0 0 14 14"><path d="M1 7H12M7 1.500L12.500 7 7 12.500" fill="none" stroke="#7d7d7d" stroke-width="1.700"/></svg>
<svg class="abs" style="left:87px;top:18.500px" width="15" height="15" viewBox="0 0 15 15"><path d="M12.600 9.600A5.600 5.600 0 1 1 12 4.200" fill="none" stroke="#e6e6e6" stroke-width="1.700"/><path d="M13.300.8V5.400H8.700Z" fill="#e6e6e6"/></svg>
<div class="abs" style="left:120px;top:9px;width:455px;height:34px;border-radius:17px;background:#282828"></div>
<div class="abs" style="left:125px;top:14px;width:104px;height:24px;border-radius:12px;background:#313131"></div>
<svg class="abs" style="left:130px;top:19.500px" width="14" height="13" viewBox="0 0 14 13"><path d="M7 1.300L13 12H1Z" fill="none" stroke="#e6e6e6" stroke-width="1.400" stroke-linejoin="round"/><path d="M7 5.200V8.600M7 9.700V11" stroke="#e6e6e6" stroke-width="1.300"/></svg>
<div class="abs" id="ns" style="left:149px;top:9px;height:34px;line-height:34px;font-size:14.6px;color:#e9e9e9;white-space:nowrap">Not secure</div>
<div class="abs" id="url" style="left:237px;top:9px;height:34px;line-height:34px;font-size:14.3px;color:#9a9a9a;white-space:nowrap"><span style="color:#ececec">node-3.mcsc.space</span><span style="letter-spacing:-.38px">:35453/dashboard?succe…</span></div>
<svg class="abs" style="left:543px;top:17.500px" width="16" height="16" viewBox="0 0 16 16"><path d="M8 1.600L9.900 6 14.700 6.400 11.100 9.500 12.200 14.200 8 11.700 3.800 14.200 4.900 9.500 1.300 6.400 6.100 6Z" fill="none" stroke="#d8d8d8" stroke-width="1.400" stroke-linejoin="round"/></svg>
<!-- extensions -->
<svg class="abs" style="left:592px;top:18px" width="18" height="15" viewBox="0 0 18 15"><path d="M8.500 0L17 5 8.500 10 0 5Z" fill="#4a12d8"/><path d="M0 5V8L8.500 13V10Z" fill="#2e0a9a"/><path d="M17 5V8L8.500 13V10Z" fill="#3a0fb8"/></svg>
<div class="abs" style="left:601px;top:25px;width:14px;height:14px;border-radius:3px;background:#5b33c9;color:#fff;font-size:11px;font-weight:bold;line-height:14px;text-align:center">3</div>
<div class="abs" style="left:629px;top:16px;height:20px;line-height:20px;font-size:15px;font-weight:bold;color:#ff4a00;transform:scale(.39,1.45);transform-origin:0 50%;letter-spacing:-.3px">CORS</div>
<svg class="abs" style="left:664px;top:17px" width="18" height="17" viewBox="0 0 18 17"><path d="M3 3.500H7V2.600Q7 .8 8.700 .8 10.400 .8 10.400 2.600V3.500H14.300V7.400H15.200Q17 7.400 17 9.100 17 10.800 15.200 10.800H14.300V15.500H3V11.800L.8 13.400M3 11.800V3.500" fill="none" stroke="#e3e3e3" stroke-width="1.500" stroke-linejoin="round"/></svg>
<div class="abs" style="left:699px;top:17px;width:1.500px;height:16px;background:#5c5c5c"></div>
<svg class="abs" style="left:718px;top:18px" width="19" height="16" viewBox="0 0 19 16"><path d="M8 12.500H1.200V1.500H16.200V6" fill="none" stroke="#e3e3e3" stroke-width="1.600"/><path d="M1.200 2.500H16.200" stroke="#e3e3e3" stroke-width="2.400"/><circle cx="12.600" cy="10.400" r="3" fill="none" stroke="#e3e3e3" stroke-width="1.500"/><path d="M14.800 12.600L17.800 15.400" stroke="#e3e3e3" stroke-width="1.700"/></svg>
<div class="abs" style="left:753px;top:17px;width:1.500px;height:16px;background:#5c5c5c"></div>
<svg class="abs" style="left:773px;top:17.500px" width="17" height="17" viewBox="0 0 17 17"><circle cx="8.500" cy="8.500" r="7.500" fill="none" stroke="#a8c7fa" stroke-width="1.500"/><circle cx="8.500" cy="6.600" r="2.500" fill="none" stroke="#a8c7fa" stroke-width="1.500"/><path d="M3.300 13.600Q8.500 8.800 13.700 13.600" fill="none" stroke="#a8c7fa" stroke-width="1.500"/></svg>
<div class="abs" style="left:815.500px;top:19px;width:3px;height:3px;border-radius:50%;background:#e6e6e6;box-shadow:0 5.500px 0 #e6e6e6,0 11px 0 #e6e6e6"></div>
<!--/TOOLBAR-->
</div>
<div id="page">
<!--PAGE-->
<!-- coordinates relative to (1080,86) -->
<!-- nav -->
<div class="abs" style="left:0;top:0;width:839px;height:64px;background:#fff;box-shadow:0 10px 15px -3px rgba(0,0,0,.1),0 4px 6px -4px rgba(0,0,0,.1)"></div>
<svg class="abs" style="left:24px;top:16px" width="32" height="32" viewBox="0 0 24 24" fill="none" stroke="#2563eb" stroke-width="2" stroke-linecap="round" stroke-linejoin="round"><path d="M13.828 10.172a4 4 0 00-5.656 0l-4 4a4 4 0 105.656 5.656l1.102-1.101m-.758-4.899a4 4 0 005.656 0l4-4a4 4 0 00-5.656-5.656l-1.100 1.100"/></svg>
<div class="t" id="brand" style="left:64px;top:18.5px;font-size:20px;font-weight:bold;line-height:28px;color:#111827;letter-spacing:-.45px">TragicRoll</div>
<svg class="abs" style="left:284px;top:24px" width="16" height="16" viewBox="0 0 24 24" fill="none" stroke="#374151" stroke-width="2" stroke-linecap="round" stroke-linejoin="round"><path d="M3 12l2-2m0 0l7-7 7 7M5 10v10a1 1 0 001 1h3m10-11l2 2m-2-2v10a1 1 0 01-1 1h-3m-6 0a1 1 0 001-1v-4a1 1 0 011-1h2a1 1 0 011 1v4a1 1 0 001 1m-6 0h6"/></svg>
<div class="t nav" style="left:304px;top:23px">Home</div>
<svg class="abs" style="left:379px;top:24px" width="16" height="16" viewBox="0 0 24 24" fill="none" stroke="#374151" stroke-width="2" stroke-linecap="round" stroke-linejoin="round"><path d="M13 16h-1v-4h-1m1-4h.010M21 12a9 9 0 11-18 0 9 9 0 0118 0z"/></svg>
<div class="t nav" style="left:399.500px;top:23px">About</div>
<svg class="abs" style="left:474px;top:24px" width="16" height="16" viewBox="0 0 24 24" fill="none" stroke="#374151" stroke-width="2" stroke-linecap="round" stroke-linejoin="round"><path d="M12 6.253v13m0-13C10.832 5.477 9.246 5 7.500 5S4.168 5.477 3 6.253v13C4.168 18.477 5.754 18 7.500 18s3.332.477 4.500 1.253m0-13C13.168 5.477 14.754 5 16.500 5c1.747 0 3.332.477 4.500 1.253v13C19.832 18.477 18.247 18 16.500 18c-1.746 0-3.332.477-4.500 1.253"/></svg>
<div class="t nav" style="left:494.500px;top:23px;letter-spacing:-.3px">How To</div>
<svg class="abs" style="left:682px;top:22px" width="20" height="20" viewBox="0 0 24 24" fill="none" stroke="#374151" stroke-width="2" stroke-linecap="round" stroke-linejoin="round"><path d="M12 3v1m0 16v1m9-9h-1M4 12H3m15.364 6.364l-.707-.707M6.343 6.343l-.707-.707m12.728 0l-.707.707M6.343 17.657l-.707.707M16 12a4 4 0 11-8 0 4 4 0 018 0z"/></svg>
<svg class="abs" style="left:734px;top:22px" width="20" height="20" viewBox="0 0 24 24" fill="none" stroke="#374151" stroke-width="2" stroke-linecap="round" stroke-linejoin="round"><path d="M10.325 4.317c.426-1.756 2.924-1.756 3.350 0a1.724 1.724 0 002.573 1.066c1.543-.940 3.310.826 2.370 2.370a1.724 1.724 0 001.065 2.572c1.756.426 1.756 2.924 0 3.350a1.724 1.724 0 00-1.066 2.573c.940 1.543-.826 3.310-2.370 2.370a1.724 1.724 0 00-2.572 1.065c-.426 1.756-2.924 1.756-3.350 0a1.724 1.724 0 00-2.573-1.066c-1.543.940-3.310-.826-2.370-2.370a1.724 1.724 0 00-1.065-2.572c-1.756-.426-1.756-2.924 0-3.350a1.724 1.724 0 001.066-2.573c-.940-1.543.826-3.310 2.370-2.370.996.608 2.296.070 2.572-1.065z"/><path d="M15 12a3 3 0 11-6 0 3 3 0 016 0z"/></svg>
<div class="t nav" style="left:762.500px;top:23px">admin</div>
<!--PAGE2-->
<!-- alert -->
<div class="abs" style="left:109px;top:97px;width:621px;height:54px;border:1px solid #bbf7d0;border-radius:8px;background:#f0fdf4"></div>
<svg class="abs" style="left:126px;top:114px" width="20" height="20" viewBox="0 0 20 20"><path fill="#4ade80" fill-rule="evenodd" d="M10 18a8 8 0 100-16 8 8 0 000 16zm3.707-9.293a1 1 0 00-1.414-1.414L9 10.586 7.707 9.293a1 1 0 00-1.414 1.414l2 2a1 1 0 001.414 0l4-4z"/></svg>
<div class="t" id="alert" style="left:158px;top:114px;font-size:14px;line-height:20px;color:#166534">Link created successfully! Your link: /test</div>
<!-- heading -->
<div class="t" id="h1" style="left:109px;top:184px;font-size:29px;font-weight:bold;line-height:36px;color:#111827;letter-spacing:-.45px">Dashboard</div>
<div class="t" id="sub" style="left:109px;top:224px;font-size:16px;line-height:24px;color:#4b5563">Manage your redirect links</div>
<!-- button -->
<div class="abs" style="left:534px;top:191px;width:196px;height:48px;border-radius:8px;background:#2563eb;box-shadow:0 10px 15px -3px rgba(0,0,0,.1),0 4px 6px -4px rgba(0,0,0,.1)"></div>
<svg class="abs" style="left:558px;top:205px" width="20" height="20" viewBox="0 0 24 24" fill="none" stroke="#fff" stroke-width="2" stroke-linecap="round" stroke-linejoin="round"><path d="M12 6v6m0 0v6m0-6h6m-6 0H6"/></svg>
<div class="t" id="btn" style="left:586px;top:203px;font-size:16px;font-weight:bold;line-height:24px;color:#fff;letter-spacing:-.32px">Create New Link</div>
<!-- stat cards -->
<div class="card" style="left:109px;top:279px;width:191px;height:102px"></div>
<svg class="abs" style="left:134px;top:314px" width="32" height="32" viewBox="0 0 24 24" fill="none" stroke="#2563eb" stroke-width="2" stroke-linecap="round" stroke-linejoin="round"><path d="M13.828 10.172a4 4 0 00-5.656 0l-4 4a4 4 0 105.656 5.656l1.102-1.101m-.758-4.899a4 4 0 005.656 0l4-4a4 4 0 00-5.656-5.656l-1.100 1.100"/></svg>
<div class="t" style="left:178px;top:304px;font-size:14px;line-height:20px;color:#4b5563">Total Links</div>
<div class="t" style="left:178px;top:324px;font-size:24px;font-weight:bold;line-height:32px;color:#111827">2</div>
<div class="card" style="left:324px;top:279px;width:191px;height:102px"></div>
<svg class="abs" style="left:349px;top:314px" width="32" height="32" viewBox="0 0 24 24" fill="none" stroke="#16a34a" stroke-width="2" stroke-linecap="round" stroke-linejoin="round"><path d="M15 12a3 3 0 11-6 0 3 3 0 016 0z"/><path d="M2.458 12C3.732 7.943 7.523 5 12 5c4.478 0 8.268 2.943 9.542 7-1.274 4.057-5.064 7-9.542 7-4.477 0-8.268-2.943-9.542-7z"/></svg>
<div class="t" style="left:393px;top:304px;font-size:14px;line-height:20px;color:#4b5563">Total Views</div>
<div class="t" style="left:393px;top:324px;font-size:24px;font-weight:bold;line-height:32px;color:#111827">0</div>
<div class="card" style="left:539px;top:279px;width:191px;height:102px"></div>
<svg class="abs" style="left:564.3px;top:314px" width="32" height="32" viewBox="0 0 24 24" fill="none" stroke="#9333ea" stroke-width="2" stroke-linecap="round" stroke-linejoin="round"><path d="M9 19v-6a2 2 0 00-2-2H5a2 2 0 00-2 2v6a2 2 0 002 2h2a2 2 0 002-2zm0 0V9a2 2 0 012-2h2a2 2 0 012 2v10m-6 0a2 2 0 002 2h2a2 2 0 002-2m0 0V5a2 2 0 012-2h2a2 2 0 012 2v14a2 2 0 01-2 2h-2a2 2 0 01-2-2z"/></svg>
<div class="t" style="left:608px;top:304px;font-size:14px;line-height:20px;color:#4b5563">Avg. Views/Link</div>
<div class="t" style="left:608px;top:324px;font-size:24px;font-weight:bold;line-height:32px;color:#111827;letter-spacing:1.300px">0.0</div>
<!-- links card -->
<div class="card" style="left:109px;top:413px;width:621px;height:272px;overflow:hidden">
  <div class="abs" style="left:0;top:60px;width:621px;height:1px;background:#e5e7eb"></div>
  <div class="abs" style="left:0;top:61px;width:621px;height:48px;background:#f9fafb"></div>
  <div class="abs" style="left:0;top:189px;width:621px;height:1px;background:#e5e7eb"></div>
</div>
<div class="t" id="yl" style="left:134px;top:431px;font-size:18.300px;font-weight:bold;line-height:28px;color:#111827;letter-spacing:-.8px">Your Links</div>
<div class="t th" style="left:134px;top:490.600px">PREVIEW</div>
<div class="t th" style="left:279px;top:490.600px">NAME</div>
<div class="t th" style="left:390px;top:490.600px">SLUG</div>
<div class="t th" style="left:530px;top:490.600px">VIEWS</div>
<div class="t th" style="left:630px;top:490.600px">ACTIONS</div>
<!-- row 1 -->
<div class="abs" style="left:134px;top:539px;width:80px;height:48px;border-radius:8px;background:#e5e7eb"></div>
<svg class="abs" style="left:162px;top:551px" width="24" height="24" viewBox="0 0 24 24" fill="none" stroke="#9ca3af" stroke-width="2" stroke-linecap="round" stroke-linejoin="round"><path d="M4 16l4.586-4.586a2 2 0 012.828 0L16 16m-2-2l1.586-1.586a2 2 0 012.828 0L20 14m-6-6h.010M6 20h12a2 2 0 002-2V6a2 2 0 00-2-2H6a2 2 0 00-2 2v12a2 2 0 002 2z"/></svg>
<div class="t td" style="left:279px;top:553px;color:#111827">testing</div>
<div class="t td" style="left:390px;top:554px;color:#2563eb">/test</div>
<svg class="abs" style="left:423.2px;top:555.7px" width="16" height="16" viewBox="0 0 24 24" fill="none" stroke="#2563eb" stroke-width="2" stroke-linecap="round" stroke-linejoin="round"><path d="M10 6H6a2 2 0 00-2 2v10a2 2 0 002 2h10a2 2 0 002-2v-4M14 4h6m0 0v6m0-6L10 14"/></svg>
<svg class="abs" style="left:530px;top:554px" width="16" height="16" viewBox="0 0 24 24" fill="none" stroke="#22c55e" stroke-width="2" stroke-linecap="round" stroke-linejoin="round"><path d="M15 12a3 3 0 11-6 0 3 3 0 016 0z"/><path d="M2.458 12C3.732 7.943 7.523 5 12 5c4.478 0 8.268 2.943 9.542 7-1.274 4.057-5.064 7-9.542 7-4.477 0-8.268-2.943-9.542-7z"/></svg>
<div class="t td" style="left:550.500px;top:552px;color:#4b5563">0</div>
<svg class="abs" style="left:630px;top:554px" width="16" height="16" viewBox="0 0 24 24" fill="none" stroke="#dc2626" stroke-width="2" stroke-linecap="round" stroke-linejoin="round"><path d="M19 7l-.867 12.142A2 2 0 0116.138 21H7.862a2 2 0 01-1.995-1.858L5 7m5 4v6m4-6v6m1-10V4a1 1 0 00-1-1h-4a1 1 0 00-1 1v3M4 7h16"/></svg>
<div class="t td" style="left:650.500px;top:552px;color:#dc2626">Delete</div>
<!-- row 2 -->
<div class="abs" style="left:134px;top:620px;width:80px;height:48px;border-radius:8px;background:#fff;box-shadow:0 1px 2px rgba(0,0,0,.06)"></div>
<svg class="abs" style="left:141px;top:636.500px" width="21" height="15" viewBox="0 0 21 15"><rect width="21" height="14.600" rx="3.600" fill="#ff0000"/><path d="M8.300 4.200L13.600 7.300 8.300 10.400Z" fill="#fff"/></svg>
<div class="t" id="yt" style="left:164px;top:633px;font-size:19px;font-weight:bold;line-height:22px;color:#0a0a0a;transform:scaleX(.58);transform-origin:0 50%;letter-spacing:-.5px">YouTube</div>
<div class="t td" style="left:279px;top:634px;color:#111827">youtube</div>
<div class="t td" style="left:390px;top:635px;color:#2563eb">/youtube</div>
<svg class="abs" style="left:449.9px;top:636.8px" width="16" height="16" viewBox="0 0 24 24" fill="none" stroke="#2563eb" stroke-width="2" stroke-linecap="round" stroke-linejoin="round"><path d="M10 6H6a2 2 0 00-2 2v10a2 2 0 002 2h10a2 2 0 002-2v-4M14 4h6m0 0v6m0-6L10 14"/></svg>
<svg class="abs" style="left:530px;top:635px" width="16" height="16" viewBox="0 0 24 24" fill="none" stroke="#22c55e" stroke-width="2" stroke-linecap="round" stroke-linejoin="round"><path d="M15 12a3 3 0 11-6 0 3 3 0 016 0z"/><path d="M2.458 12C3.732 7.943 7.523 5 12 5c4.478 0 8.268 2.943 9.542 7-1.274 4.057-5.064 7-9.542 7-4.477 0-8.268-2.943-9.542-7z"/></svg>
<div class="t td" style="left:550.500px;top:633px;color:#4b5563">0</div>
<svg class="abs" style="left:630px;top:635px" width="16" height="16" viewBox="0 0 24 24" fill="none" stroke="#dc2626" stroke-width="2" stroke-linecap="round" stroke-linejoin="round"><path d="M19 7l-.867 12.142A2 2 0 0116.138 21H7.862a2 2 0 01-1.995-1.858L5 7m5 4v6m4-6v6m1-10V4a1 1 0 00-1-1h-4a1 1 0 00-1 1v3M4 7h16"/></svg>
<div class="t td" style="left:650.500px;top:633px;color:#dc2626">Delete</div>
<!-- footer -->
<div class="abs" style="left:0;top:940px;width:839px;height:53px;background:#fff;border-top:1px solid #e5e7eb"></div>
<div class="t" id="ft" style="left:313.500px;top:957px;font-size:14px;line-height:20px;color:#4b5563">Made with <svg style="display:inline-block;vertical-align:-3px;margin:0 3px 0 3.500px" width="17" height="17" viewBox="0 0 20 20"><path fill="#3b82f6" d="M3.172 5.172a4 4 0 015.656 0L10 6.343l1.172-1.171a4 4 0 115.656 5.656L10 17.657l-6.828-6.829a4 4 0 010-5.656z"/></svg> by psychoSherlock</div>
<!--/PAGE2-->
<!--/PAGE-->
</div>
</div>

<!-- ================= TOP BAR ================= -->
<div id="topbar">
<div class="chromebg"></div>
<!--TOPBAR-->
<!-- chrome tab strip seen through bar -->
<svg class="abs" style="left:1080px;top:0" width="839" height="36"><path d="M0 36V13Q0 5 8 5H236Q243.500 5 243.500 13V30Q243.500 38.500 252 38.500H832Q839 38.500 839 46V36H0Z" fill="#353535"/><path d="M839 38V46Q839 38.500 832 38.500Z" fill="#292929"/><path d="M0 13Q0 5.500 8 5.500H236Q243.500 5.500 243.500 13V30Q243.500 38.500 252 38.500H832Q839 38.500 839 46" fill="none" stroke="#6b6b6b" stroke-width="1"/><path d="M259 19.200H269M264 14.200V24.200" stroke="#e4e4e4" stroke-width="2" fill="none"/><path d="M0 0H3L0 3Z" fill="#b0061a"/><path d="M839 0H834.500L839 4Z" fill="#8a0418"/></svg>

<!-- 1: cat + 11% -->
<div class="pill" style="left:3px;width:84px"></div>
<svg class="abs" style="left:17px;top:12px" width="26" height="13" viewBox="0 0 26 13"><path d="M.2 2.600C1.200 1.300 4.500 1.200 6.800 2.600L8.800 4.300C11 3.400 15 3.600 17.300 3.300L18.600 1.400 19.600 .1 20.600 1.600H21.800L22.800 .2 23.600 1.800C25.200 3 25.400 5.400 24.400 6.600L23 7.300 24.600 8.600 24 10 22.600 11.800 21.400 11.200 22 9.600 19.400 9.400C16 10 13 10 11.500 10L9 10.600 7.300 12.700 6 12.200 6.600 10.600H4.200L3.200 9.600 4.200 7.800C5 6.500 6 5.600 6.600 5.200 5.400 3.600 3.200 3 .6 3.600Z" fill="#c8c8cc"/><circle cx="21" cy="4" r=".55" fill="#5a5c68"/><circle cx="23.300" cy="4" r=".55" fill="#5a5c68"/></svg>
<div class="pt" style="left:49px">11%</div>
<!-- 2: Apps -->
<div class="pill" style="left:95px;width:55px;border-color:#a8c97c"></div>
<div class="pt" style="left:107px;color:#b9d08c;font-size:13.4px;-webkit-text-stroke:.4px #b9d08c">Apps</div>
<!-- 3: Places -->
<div class="pill" style="left:158px;width:62px;border-color:#e58eb1"></div>
<div class="pt" style="left:170.5px;color:#eaa0ba;font-size:12.4px;-webkit-text-stroke:.4px #eaa0ba">Places</div>
<!-- 4: cloud -->
<div class="pill" style="left:228px;width:40px"></div>
<svg class="abs" style="left:240px;top:14.900px" width="16.200" height="8.200" viewBox="0 0 16.200 8.200"><path d="M0 8.200V6.800Q.2 5.600 1.600 5.200 2 3.200 3.600 2.900 4.600 2.700 5.400 3 6 .1 8.600 0 11.400 0 12.100 3.300 14 3.200 15.200 4.800 16.200 6 16.200 7.400V8.200Z" fill="#fb0505"/><path d="M4.500 5.700H11" stroke="#c70a0a" stroke-width=".7"/><path d="M11.300 5.300L12 7.900 12.500 5.400Z" fill="#7a1420"/></svg>
<!-- window title -->
<div class="pt" style="left:451px;top:-1px;font-size:15.4px;color:#b4b5bc;-webkit-text-stroke:.3px #b4b5bc">python3</div>
<!-- 5: date -->
<div class="pill" style="left:605px;width:101px;border-color:#f1c47c"></div>
<div class="pt" style="left:617px;color:#f3cf8e;font-size:13.6px;word-spacing:1px;-webkit-text-stroke:.5px #f3cf8e">Feb 1  08:47</div>
<!-- 6: stats -->
<div class="pill" style="left:714px;width:320px"></div>
<svg class="abs" style="left:736px;top:12px" width="12" height="14" viewBox="0 0 12 14"><rect width="12" height="14" rx="1" fill="#d4d4d6"/><circle cx="6" cy="6.200" r="3.600" fill="#2a2d39"/><circle cx="6.400" cy="5.800" r="1.700" fill="#d4d4d6"/></svg>
<div class="pt" style="left:752.5px">52.0 GB</div>
<svg class="abs" style="left:820px;top:11px" width="16" height="16" viewBox="0 0 16 16"><rect x="1" y="3.300" width="14" height="9" rx="1" fill="none" stroke="#d0d0d3" stroke-width="1.400"/><path d="M3.500 1V3M6.500 1V3M9.500 1V3M12.500 1V3M3.500 12.600V14.600M6.500 12.600V14.600M9.500 12.600V14.600M12.500 12.600V14.600" stroke="#d0d0d3" stroke-width="1.100"/></svg>
<div class="pt" style="left:838px;letter-spacing:.35px">605.1 MB</div>
<svg class="abs" style="left:909px;top:11px" width="16" height="16" viewBox="0 0 16 16"><rect x="1" y="3.300" width="14" height="9" rx="1" fill="none" stroke="#d0d0d3" stroke-width="1.400"/><path d="M3.500 1V3M6.500 1V3M9.500 1V3M12.500 1V3M3.500 12.600V14.600M6.500 12.600V14.600M9.500 12.600V14.600M12.500 12.600V14.600" stroke="#d0d0d3" stroke-width="1.100"/></svg>
<div class="pt" style="left:928px;letter-spacing:.5px">76%</div>
<svg class="abs" style="left:968px;top:10.500px" width="15" height="17" viewBox="0 0 15 17"><path d="M1.500 1H5.500Q6.500 2.800 7.500 1H11.500Q12.500 2.800 13.500 1V15.500H3V8.500H1.200V5.500H3V1Z" fill="none" stroke="#b9bac0" stroke-width="1.100"/><circle cx="8.300" cy="5.300" r="2" fill="none" stroke="#b9bac0" stroke-width="1.300"/><circle cx="8.300" cy="11.300" r="2" fill="none" stroke="#b9bac0" stroke-width="1.300"/></svg>
<div class="pt" style="left:989px;letter-spacing:.7px">31%</div>
<!-- 7: net -->
<div class="pill" style="left:1042.500px;width:271.500px"></div>
<svg class="abs" style="left:1060px;top:12px" width="14" height="14" viewBox="0 0 14 14"><rect x="2.300" y="2.300" width="9.400" height="9.400" rx="2" fill="none" stroke="#cfcfd2" stroke-width="1.300"/><rect x="4.600" y="4.600" width="4.800" height="4.800" rx=".8" fill="#cfcfd2"/><path d="M5 0V2M7 0V2M9 0V2M5 12V14M7 12V14M9 12V14M0 5H2M0 7H2M0 9H2M12 5H14M12 7H14M12 9H14" stroke="#cfcfd2" stroke-width=".9"/></svg>
<div class="pt" style="left:1082px">4%</div>
<svg class="abs" style="left:1122px;top:12px" width="14" height="14" viewBox="0 0 14 14"><path d="M2 9.700H12M2 9.700L5.300 6.600M2 9.700L5.300 12.800M12 4.300H3.500M12 4.300L8.700 1.200M12 4.300L8.700 7.400" fill="none" stroke="#d2d2d5" stroke-width="1.500" stroke-linecap="round"/></svg>
<div class="pt" style="left:1141px">71%</div>
<svg class="abs" style="left:1186px;top:12px" width="10" height="14" viewBox="0 0 10 14"><path d="M5 13V1.500M1 5.300L5 1.300 9 5.300" fill="none" stroke="#d2d2d5" stroke-width="1.500"/></svg>
<div class="pt" style="left:1200.500px;letter-spacing:-.3px;word-spacing:-1.5px">10 kB</div>
<svg class="abs" style="left:1248px;top:12px" width="10" height="14" viewBox="0 0 10 14"><path d="M5 1V12.500M1 8.700L5 12.700 9 8.700" fill="none" stroke="#d2d2d5" stroke-width="1.500"/></svg>
<div class="pt" style="left:1261px;letter-spacing:-.4px;word-spacing:-1.5px">2.3 kB</div>
<!-- 8: tray pills -->
<div class="pill" style="left:1345.500px;width:51.500px"></div>
<svg class="abs" style="left:1365.500px;top:12px" width="11" height="14" viewBox="0 0 11 14"><rect width="11" height="14" rx="1.200" fill="#c9c9cd"/><rect x="1.800" y="2.300" width="7.400" height="8.600" fill="#292c38"/><rect x="4.300" y="11.700" width="2.400" height="1" rx=".5" fill="#292c38"/></svg>
<div class="pill" style="left:1405px;width:52px"></div>
<svg class="abs" style="left:1423.500px;top:11.500px" width="15" height="15" viewBox="0 0 15 15"><circle cx="7.500" cy="7.500" r="7.300" fill="#c6c6ca"/><path d="M.6 4.800H14.400V6.200H13.300Q12.800 8.400 10.800 8.400 8.900 8.400 8.300 6.200H6.700Q6.100 8.400 4.200 8.400 2.200 8.400 1.700 6.200H.6Z" fill="#292c38"/><path d="M3 9.800Q7.500 13.500 12 9.800 7.500 11.600 3 9.800Z" fill="#292c38" stroke="#292c38" stroke-width=".6"/></svg>
<div class="pill" style="left:1465px;width:40px;background:#44475a"></div>
<svg class="abs" style="left:1478px;top:11.500px" width="14" height="14" viewBox="0 0 14 14"><path d="M1.800 12.500C.6 9 3 6.500 4.300 2.800 5.300 5 5 6.800 4.400 8.200 5.800 6 7 3.600 7.300 1 8.600 3.400 8.400 6 7.300 8.400 9 6.600 10.300 4.400 10.700 2.300 12.500 5.500 11 9.300 7.800 10.800 5.500 11.800 3.500 11.200 1.800 12.500Z" fill="#e9e9ec"/><path d="M5.500 10.600C7.800 10.500 10.600 8.600 11.400 5.800" fill="none" stroke="#44475a" stroke-width=".7"/></svg>
<div class="pill" style="left:1513px;width:52px"></div>
<svg class="abs" style="left:1531px;top:11px" width="16" height="16" viewBox="0 0 16 16"><rect width="16" height="16" rx="3" fill="#1e1f26"/><g fill="#8d8d93"><rect x="2.800" y="2.800" width="2.400" height="2.400"/><rect x="6.800" y="2.800" width="2.400" height="2.400"/><rect x="10.800" y="2.800" width="2.400" height="2.400"/><rect x="2.800" y="10.800" width="2.400" height="2.400"/><rect x="10.800" y="10.800" width="2.400" height="2.400"/></g><g fill="#f2f2f4"><rect x="2.800" y="6.800" width="2.400" height="2.400"/><rect x="6.800" y="6.800" width="2.400" height="2.400"/><rect x="10.800" y="6.800" width="2.400" height="2.400"/><rect x="6.800" y="10.800" width="2.400" height="2.400"/></g></svg>
<div class="pill" style="left:1573px;width:40px"></div>
<svg class="abs" style="left:1585px;top:12px" width="17" height="13" viewBox="0 0 17 13"><path d="M3.200 2.200C4.300 1.600 5.400 1.300 6.400 1.200L6.900 2.100C7.800 2 8.700 2 9.600 2.100L10.100 1.200C11.200 1.300 12.200 1.600 13.300 2.200 15.100 4.900 15.900 7.600 15.600 10.700 14.400 11.700 13.200 12.200 12 12.500L11.100 11.100C11.700 10.900 12.200 10.600 12.600 10.300 10 11.500 6.500 11.500 3.900 10.300 4.300 10.600 4.800 10.900 5.400 11.100L4.500 12.500C3.300 12.200 2.100 11.700.9 10.700.6 7.600 1.400 4.900 3.200 2.200Z" fill="#f4f4f6"/><ellipse cx="6" cy="7.300" rx="1.300" ry="1.500" fill="#292c38"/><ellipse cx="10.500" cy="7.300" rx="1.300" ry="1.500" fill="#292c38"/></svg>

<div class="abs" style="left:1595.500px;top:12px;width:5px;height:5px;border-radius:50%;background:#f0383f"></div>
<div class="pill" style="left:1621px;width:40px"></div>
<svg class="abs" style="left:1633.500px;top:11.500px" width="15" height="15" viewBox="0 0 15 15"><circle cx="7.500" cy="7.500" r="7.300" fill="#1ed760"/><path d="M3.300 5.400Q7.700 4.200 11.900 6.200M3.800 7.800Q7.500 6.900 11 8.600M4.300 10.100Q7.300 9.400 10.200 10.900" fill="none" stroke="#16301f" stroke-width="1.300" stroke-linecap="round"/></svg>
<div class="pill" style="left:1669px;width:52px"></div>
<svg class="abs" style="left:1688.500px;top:10.500px" width="13" height="16" viewBox="0 0 13 16"><path d="M1 3.500H12V15H1Z" fill="none" stroke="#cdcdd0" stroke-width="1.500"/><path d="M3.800 3.500V1.800H5.300Q6.500 0 7.700 1.800H9.200V3.500" fill="none" stroke="#cdcdd0" stroke-width="1.300"/></svg>
<!-- 9: status -->
<div class="pill" style="left:1729px;width:186px;border-color:#cfa1cb"></div>
<svg class="abs" style="left:1748.500px;top:11px" width="13" height="16" viewBox="0 0 13 16"><rect x="4.200" y=".3" width="4.600" height="9.400" rx="2.300" fill="#ff7f00"/><path d="M1.200 7.200Q1.200 12 6.500 12 11.800 12 11.800 7.200M6.500 12V15.700" fill="none" stroke="#ff7f00" stroke-width="1.500"/></svg>
<svg class="abs" style="left:1779px;top:12px" width="17" height="14" viewBox="0 0 17 14"><path d="M8.500 14L.2 3.800Q8.500 -2.800 16.800 3.800Z" fill="#cfa1cb"/></svg>
<svg class="abs" style="left:1811.500px;top:11px" width="16" height="16" viewBox="0 0 16 16"><path d="M.3 5.300H3.500L8 1.300V14.700L3.500 10.700H.3Z" fill="#cfa1cb"/><path d="M10 4.300Q12.300 8 10 11.700M11.300 1.300Q16.800 8 11.300 14.700" fill="none" stroke="#cfa1cb" stroke-width="1.500"/></svg>
<svg class="abs" style="left:1845.500px;top:11px" width="11" height="15" viewBox="0 0 11 15"><path d="M3 0H8V1.500H10Q10.600 1.500 10.600 2.100V14.400Q10.600 15 10 15H1Q.4 15 .4 14.400V2.100Q.4 1.500 1 1.500H3Z" fill="#cfa1cb"/><path d="M6.600 3.600L3 8.600H5.300L4.400 12.400 8 7.200H5.700Z" fill="#292c38"/></svg>
<div class="pt" style="left:1865.500px;color:#d6b0d6;-webkit-text-stroke:.3px #d6b0d6;letter-spacing:.6px">100%</div>
<!--/TOPBAR-->
</div>

<!-- ================= ANNOTATIONS ================= -->
<!--ANNOT-->
<svg class="abs" style="left:0;top:0;z-index:60;pointer-events:none" width="1919" height="1079">
<rect x="-3" y="104.2" width="723.2" height="52.6" fill="none" stroke="#fa0535" stroke-width="3.6"/>
<line x1="679" y1="162.2" x2="742.6" y2="195.8" stroke="#fa0535" stroke-width="3.6"/>
<polygon points="658.3,151 683.5,155.6 675.3,169" fill="#fa0535"/>
<rect x="1183.7" y="574.3" width="633.4" height="115.4" fill="none" stroke="#fa0535" stroke-width="3.4"/>
</svg>
<!--/ANNOT-->

</body>
</html>
